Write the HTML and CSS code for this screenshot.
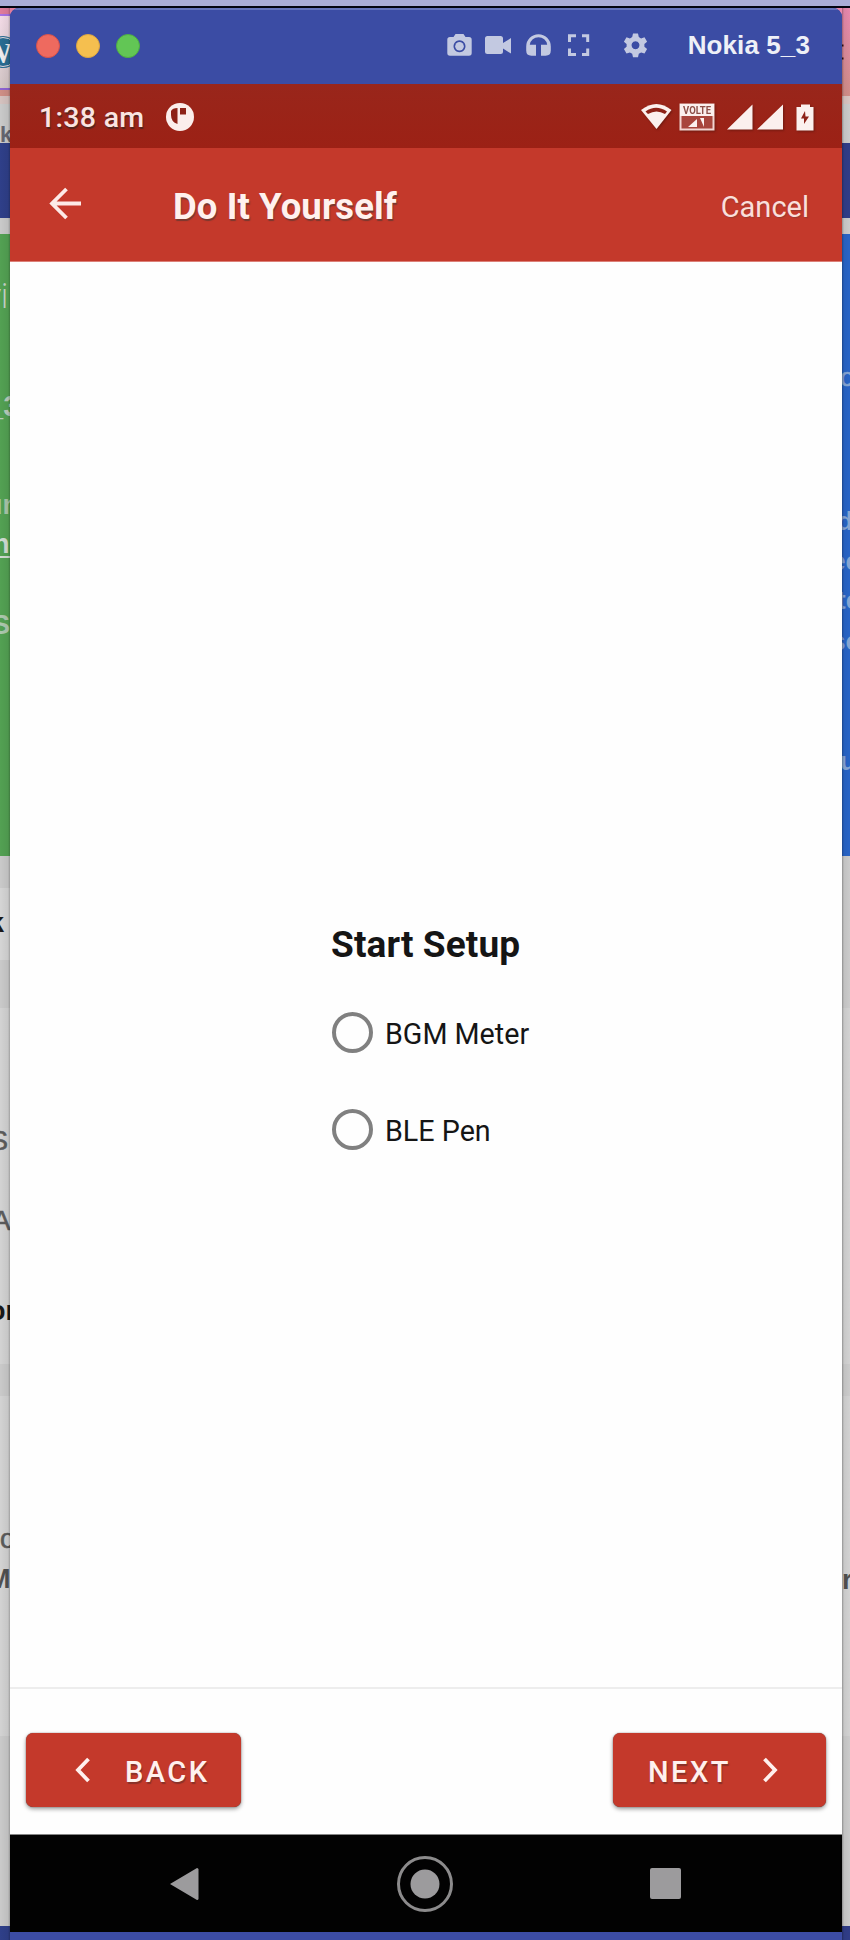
FILE: index.html
```html
<!DOCTYPE html>
<html lang="en">
<head>
<meta charset="utf-8">
<title>Nokia 5_3</title>
<link rel="stylesheet" href="styles.css">
</head>
<body>
<div class="menubar"></div>
<div class="desktop">
  <svg class="behind" width="10" height="1932" viewBox="0 8 10 1932" aria-hidden="true">
    <defs>
      <linearGradient id="tab" x1="0" y1="0" x2="0" y2="1"><stop offset="0" stop-color="#f3dbe7"/><stop offset="1" stop-color="#d3c6c6"/></linearGradient>
      <linearGradient id="shadeL" x1="0" y1="0" x2="1" y2="0"><stop offset="0" stop-color="#000" stop-opacity="0"/><stop offset=".8" stop-color="#000" stop-opacity=".06"/><stop offset="1" stop-color="#000" stop-opacity=".25"/></linearGradient>
    </defs>
    <rect y="8" width="10" height="1932" fill="#cacaca"/>
    <rect y="8" width="10" height="6" fill="#e07c9c"/>
    <rect y="14" width="10" height="2" fill="#a873e6"/>
    <rect y="16" width="10" height="72" fill="url(#tab)"/>
    <circle cx="3" cy="52" r="16" fill="#286c92"/>
    <circle cx="3" cy="52" r="14.5" fill="none" stroke="#e5dce3" stroke-width="1"/>
    <text x="-17" y="63" font-size="29" class="serif" fill="#eee">W</text>
    <rect y="88" width="10" height="2" fill="#8e63d2"/>
    <rect y="90" width="10" height="6" fill="#cf8f86"/>
    <rect y="96" width="10" height="8" fill="#d5c2bf"/>
    <text x="0" y="142" font-size="22" class="bold" fill="#666670">k</text>
    <rect y="143" width="10" height="75" fill="#2f3f89"/>
    <rect y="234" width="10" height="622" fill="#53a153"/>
    <text x="8.5" y="308" font-size="34" text-anchor="end" class="light" fill="#c6d3c8">vi</text>
    <text x="-13" y="416" font-size="29" class="bold" fill="#b9cdbb">_3</text>
    <text x="-14" y="514" font-size="27" class="bold" fill="#a9c6aa">un</text>
    <text x="-7" y="553" font-size="27" class="bold" fill="#d2dcd3">n</text>
    <rect y="556" width="10" height="2" fill="#d2dcd3"/>
    <text x="-8" y="634" font-size="27" class="bold" fill="#adc8ae">S</text>
    <rect y="888" width="10" height="72" fill="#d5d5d5"/>
    <text x="4" y="932" font-size="27" text-anchor="end" class="bold" fill="#181818">k</text>
    <rect y="1008" width="10" height="356" fill="#d3d3d3"/>
    <text x="-10" y="1150" font-size="27" fill="#5b5b5b" stroke="#5b5b5b" stroke-width=".6">S</text>
    <text x="-8" y="1230" font-size="28" fill="#5b5b5b" stroke="#5b5b5b" stroke-width=".6">A</text>
    <text x="-11" y="1320" font-size="27" class="bold" fill="#181818">or</text>
    <rect y="1396" width="10" height="340" fill="#d3d3d3"/>
    <text x="0" y="1548" font-size="27" fill="#5b5b5b" stroke="#5b5b5b" stroke-width=".6">o</text>
    <text x="-12" y="1588" font-size="27" class="bold" fill="#505050">M</text>
    <rect y="1926" width="10" height="14" fill="#2f3f89"/>
    <rect y="8" width="10" height="1932" fill="url(#shadeL)"/>
  </svg>

  <main class="window">
    <header class="titlebar">
      <div class="lights"><i class="light-red"></i><i class="light-yellow"></i><i class="light-green"></i></div>
      <svg class="tools" width="202" height="28" viewBox="446 32 202 28" fill="#c3c9e1" aria-hidden="true">
        <path fill-rule="evenodd" d="M450 37h3.500l2-3h8l2 3h3.500q2.700 0 2.700 2.700v13.300q0 2.700-2.700 2.700h-19q-2.700 0-2.700-2.700v-13.300q0-2.700 2.700-2.700zM459.500 40.300a6 6 0 1 0 .01 0z"/>
        <circle cx="459.500" cy="46.300" r="4.300"/>
        <path d="M487.500 36h13q2.500 0 2.500 2.500v4.500l8-5v15.500l-8-5v3q0 2.500-2.500 2.500h-13q-2.500 0-2.500-2.500v-13q0-2.500 2.500-2.500z"/>
        <path d="M538.500 34.200a12.300 12.300 0 0 0-12.300 12.300v4q0 5.200 5.200 5.200h4.600v-11h-6.200a8.800 8.800 0 0 1 17.400 0h-6.200v11h4.600q5.200 0 5.200-5.200v-4a12.300 12.300 0 0 0-12.300-12.300z"/>
        <path d="M569.500 42v-6.300h6.500M582 35.700h5.700v6.300M587.700 48.500v6h-5.700M576 54.500h-6.500v-6" fill="none" stroke="#c3c9e1" stroke-width="3"/>
        <path fill-rule="evenodd" d="M633 33.500h5l.8 3.600 2.300 1.300 3.400-1.200 2.600 4.500-2.700 2.400v2.600l2.700 2.400-2.600 4.500-3.400-1.200-2.300 1.300-.8 3.500h-5l-.8-3.500-2.300-1.300-3.400 1.200-2.600-4.500 2.700-2.400v-2.600l-2.700-2.400 2.600-4.500 3.400 1.200 2.300-1.300zM635.500 41.300a4 4 0 1 0 .01 0z"/>
      </svg>
      <h1 class="device">Nokia 5_3</h1>
    </header>

    <div class="statusbar">
      <span class="clock">1:38 am</span>
      <svg width="28" height="28" viewBox="0 0 28 28" aria-hidden="true">
        <circle cx="14" cy="14" r="14" fill="#fbeeec"/>
        <path d="M5 8q1.500-3 6.500-3v16q-6.500-2-6.500-9z M14 5h6v6.500h-6z" fill="#8d2218"/>
      </svg>
      <svg class="signals" width="176" height="30" viewBox="640 101 176 30" fill="#fbf0ee" aria-hidden="true">
        <path d="M641 109q15.500-12 30.500 0l-15 19z"/>
        <path d="M645.500 110.500q10.500-7.500 21.500 0l-2 2.500q-8.500-5-17 0z" fill="#8d2218"/>
        <rect x="680.500" y="103.500" width="33" height="25" fill="#a8453c" stroke="#f3d5d1" stroke-width="2"/>
        <path d="M680 103h34v12h-34z"/>
        <text x="683" y="113" font-size="10.500" class="bold" textLength="28" lengthAdjust="spacingAndGlyphs" fill="#8d5049">VOLTE</text>
        <path d="M688 126l9-8v8zM700 117l4 9v-9z"/>
        <path d="M727 128.500l25.500-25v25zM757 128.500l26-25v25z"/>
        <path d="M801 103.500h9v2.500h3.500v23.500h-17v-23.500h4.500z"/>
        <path d="M805 110l-4 7.500h3v5.500l5-7.500h-3.500z" fill="#8d2218"/>
      </svg>
    </div>

    <div class="appbar">
      <svg width="34" height="34" viewBox="0 0 34 34" fill="none" stroke="#fdeae7" stroke-width="3.800" aria-hidden="true"><path d="M33 17.500H4M18.500 3L4 17.500 18.500 32"/></svg>
      <h2 class="screen-title">Do It Yourself</h2>
      <span class="cancel">Cancel</span>
    </div>

    <section class="content">
      <div class="setup">
        <h3 class="setup-title">Start Setup</h3>
        <div class="option"><i class="radio"></i><span>BGM Meter</span></div>
        <div class="option"><i class="radio"></i><span>BLE Pen</span></div>
      </div>
    </section>

    <footer class="actions">
      <div class="btn btn-back">
        <svg width="16" height="26" viewBox="0 0 16 26" fill="none" stroke="#fff0ee" stroke-width="3.800" aria-hidden="true"><path d="M13.500 2L3 13l10.500 11"/></svg>
        <span>BACK</span>
      </div>
      <div class="btn btn-next">
        <span>NEXT</span>
        <svg width="16" height="26" viewBox="0 0 16 26" fill="none" stroke="#fff0ee" stroke-width="3.800" aria-hidden="true"><path d="M2.500 2L13 13 2.500 24"/></svg>
      </div>
    </footer>

    <nav class="navbar">
      <svg width="30" height="34" viewBox="0 0 30 34"><path d="M1 17L28 1q1.500 0 1.500 1.500v29q0 1.500-1.500 1.500z" fill="#9c9b9d"/></svg>
      <svg width="58" height="58" viewBox="0 0 58 58"><circle cx="29" cy="29" r="26.500" fill="none" stroke="#8c8b8c" stroke-width="3"/><circle cx="29" cy="29" r="14.500" fill="#9c9b9d"/></svg>
      <i class="nav-square"></i>
    </nav>
  </main>

  <svg class="behind" width="8" height="1932" viewBox="842 8 8 1932" aria-hidden="true">
    <defs>
      <linearGradient id="rose" x1="0" y1="0" x2="0" y2="1"><stop offset="0" stop-color="#e888ae"/><stop offset="1" stop-color="#d08e88"/></linearGradient>
      <linearGradient id="shadeR" x1="0" y1="0" x2="1" y2="0"><stop offset="0" stop-color="#000" stop-opacity=".3"/><stop offset=".25" stop-color="#000" stop-opacity=".05"/><stop offset="1" stop-color="#000" stop-opacity="0"/></linearGradient>
    </defs>
    <rect x="842" y="8" width="8" height="1932" fill="#cbcbcb"/>
    <rect x="842" y="8" width="8" height="88" fill="url(#rose)"/>
    <path d="M842 44.500h1.500v2H842zM842 57.500h1.500v2H842z" fill="#311"/>
    <rect x="842" y="96" width="8" height="8" fill="#d8c4c1"/>
    <rect x="842" y="143" width="8" height="75" fill="#303d88"/>
    <rect x="842" y="234" width="8" height="622" fill="#2864c6"/>
    <g fill="#86a6d4">
      <text x="840" y="386" font-size="26" stroke="#86a6d4" stroke-width=".6">o</text>
      <g class="bold">
        <text x="837" y="530" font-size="26">d</text>
        <text x="831" y="570" font-size="26">ee</text>
        <text x="837" y="609" font-size="26">te</text>
        <text x="831" y="650" font-size="26">sc</text>
        <text x="840" y="770" font-size="26">u</text>
      </g>
    </g>
    <rect x="842" y="1008" width="8" height="356" fill="#d2d2d2"/>
    <rect x="842" y="1396" width="8" height="340" fill="#d2d2d2"/>
    <text x="842" y="1589" font-size="27" class="bold" fill="#505050">r</text>
    <rect x="842" y="1926" width="8" height="14" fill="#303d88"/>
    <rect x="842" y="8" width="8" height="1932" fill="url(#shadeR)"/>
  </svg>
</div>
</body>
</html>
```
FILE: styles.css
```css
* { box-sizing: border-box; }

body {
  margin: 0;
  width: 850px;
  height: 1940px;
  overflow: hidden;
  font-family: Roboto, "Liberation Sans", sans-serif;
  background: #cacaca;
}

h1, h2, h3 { margin: 0; }
svg, i { display: block; flex: none; }

.menubar {
  height: 8px;
  background: #a9acd6;
  border-bottom: 2px solid #02040f;
}

.desktop {
  display: flex;
  height: 1932px;
  background: linear-gradient(90deg, #e07c9c 50%, #e888ae 50%);
}

.behind { font-family: "Liberation Sans", sans-serif; }
.bold { font-weight: 700; }
.light { font-family: "Open Sans", sans-serif; font-weight: 300; }
.serif { font-family: "Liberation Serif", serif; font-weight: 700; }

.window {
  width: 832px;
  height: 1932px;
  display: flex;
  flex-direction: column;
  border-radius: 9px 9px 0 0;
  overflow: hidden;
  background: #3c4ca5;
}

.titlebar {
  height: 76px;
  padding: 0 32px 2px 26px;
  display: flex;
  align-items: center;
  border-top: 2px solid #6473bb;
  background: #3b4ca4;
}

.lights { display: flex; gap: 16px; }
.lights i { width: 24px; height: 24px; border-radius: 50%; }
.light-red { background: #ee6a5f; border: 1px solid #d8524a; }
.light-yellow { background: #f5bf4f; border: 1px solid #dda640; }
.light-green { background: #62c655; border: 1px solid #4eae42; }

.tools { margin-left: 306px; }

.device {
  margin: -2px 0 0 auto;
  font: 700 26px/40px "Liberation Sans", sans-serif;
  letter-spacing: .1px;
  color: #eef0f7;
}

.statusbar {
  height: 64px;
  padding: 2px 26px 0 29px;
  display: flex;
  align-items: center;
  background: linear-gradient(#99261b, #9c2115);
  color: #fae4e1;
}

.clock {
  width: 127px;
  padding-top: 1px;
  font-size: 28.500px;
  font-weight: 500;
  letter-spacing: .3px;
  text-shadow: 1px 2px 1px #54251f;
}

.signals { margin-left: auto; filter: drop-shadow(1px 1px 1px #6d190f); }

.appbar {
  height: 114px;
  padding: 0 33px 0 38px;
  display: flex;
  align-items: center;
  background: #c4392b;
  border-bottom: 1px solid #dc8078;
}

.appbar svg { margin-top: -3px; }

.screen-title {
  margin: 4px 0 0 91px;
  font-size: 36.500px;
  font-weight: 700;
  letter-spacing: .1px;
  color: #fff1ee;
  text-shadow: 1px 2px 1px #7a382f;
}

.cancel {
  margin: 4px 0 0 auto;
  font-size: 29px;
  color: #fadfdb;
  text-shadow: 1px 1px 1px #983b31;
}

.content {
  height: 1425px;
  padding: 662px 0 0 321px;
  background: #fefefe;
  color: #151515;
}

.setup-title { font-size: 37px; line-height: 42px; font-weight: 700; letter-spacing: .1px; }
.option { display: flex; align-items: center; height: 40px; gap: 12px; font-size: 28.700px; }
.setup-title + .option { margin: 46px 0 57px; }
.radio { width: 41px; height: 41px; margin-left: 1px; border: 4px solid #808080; border-radius: 50%; }
.option span { padding-top: 3px; }

.actions {
  height: 148px;
  padding: 44px 16px 0;
  display: flex;
  justify-content: space-between;
  align-items: flex-start;
  border-top: 2px solid #ededed;
  border-bottom: 1px solid #858585;
  background: #fefefe;
}

.btn {
  height: 74px;
  display: flex;
  align-items: center;
  border-radius: 7px;
  background: #c4392b;
  box-shadow: 0 2px 4px rgba(0, 0, 0, .4), 0 0 1px #5a2a28;
  color: #fff0ee;
  font-size: 29px;
  font-weight: 500;
  letter-spacing: 2.500px;
  text-shadow: 1px 2px 1px #8a3128;
}

.btn span { padding-top: 3px; }
.btn-back { width: 215px; padding-left: 49px; gap: 34px; }
.btn-next { width: 213px; padding-left: 35px; gap: 31px; }

.navbar {
  height: 97px;
  padding: 0 161px 0 159px;
  display: flex;
  align-items: center;
  justify-content: space-between;
  background: #020202;
}

.nav-square { width: 31px; height: 31px; border-radius: 2px; background: #9c9b9d; }
```
